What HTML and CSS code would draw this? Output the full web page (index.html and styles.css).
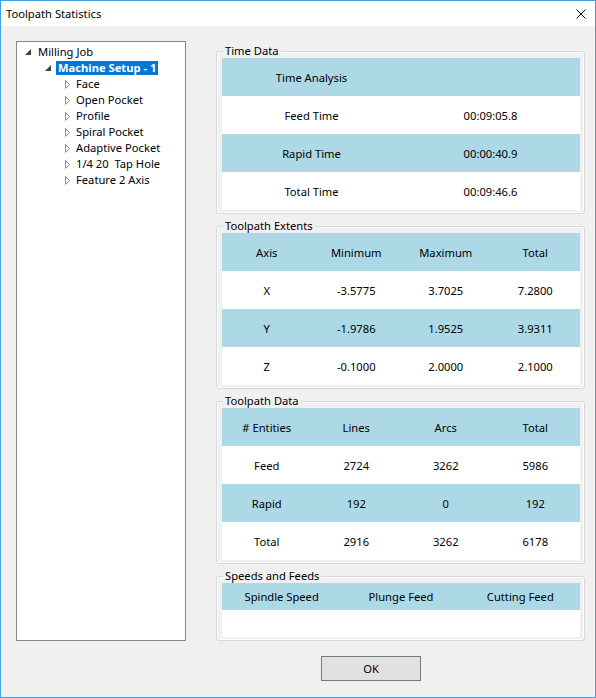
FILE: index.html
```html
<!DOCTYPE html>
<html>
<head>
<meta charset="utf-8">
<title>Toolpath Statistics</title>
<link rel="stylesheet" href="styles.css">
</head>
<body>
<div class="window">
  <div class="titlebar">
    <span class="title">Toolpath Statistics</span>
    <svg class="close" width="10" height="10" viewBox="0 0 10 10"><path d="M0.5 0.5L9.5 9.5M9.5 0.5L0.5 9.5" stroke="#000" stroke-width="1"/></svg>
  </div>
  <div class="client">
    <div class="main">
      <div class="tree">
        <div class="node l0"><svg class="exp" width="6" height="6" viewBox="0 0 6 6"><path d="M6 0V6H0Z" fill="#404040"/></svg><span class="label">Milling Job</span></div>
        <div class="node l1"><svg class="exp" width="6" height="6" viewBox="0 0 6 6"><path d="M6 0V6H0Z" fill="#404040"/></svg><span class="label selected">Machine Setup - 1</span></div>
        <div class="node l2"><svg class="col" width="6" height="9" viewBox="0 0 6 9"><path d="M0.5 0.5L4.5 4.5L0.5 8.5Z" fill="#fff" stroke="#8f8f8f"/></svg><span class="label">Face</span></div>
        <div class="node l2"><svg class="col" width="6" height="9" viewBox="0 0 6 9"><path d="M0.5 0.5L4.5 4.5L0.5 8.5Z" fill="#fff" stroke="#8f8f8f"/></svg><span class="label">Open Pocket</span></div>
        <div class="node l2"><svg class="col" width="6" height="9" viewBox="0 0 6 9"><path d="M0.5 0.5L4.5 4.5L0.5 8.5Z" fill="#fff" stroke="#8f8f8f"/></svg><span class="label">Profile</span></div>
        <div class="node l2"><svg class="col" width="6" height="9" viewBox="0 0 6 9"><path d="M0.5 0.5L4.5 4.5L0.5 8.5Z" fill="#fff" stroke="#8f8f8f"/></svg><span class="label">Spiral Pocket</span></div>
        <div class="node l2"><svg class="col" width="6" height="9" viewBox="0 0 6 9"><path d="M0.5 0.5L4.5 4.5L0.5 8.5Z" fill="#fff" stroke="#8f8f8f"/></svg><span class="label">Adaptive Pocket</span></div>
        <div class="node l2"><svg class="col" width="6" height="9" viewBox="0 0 6 9"><path d="M0.5 0.5L4.5 4.5L0.5 8.5Z" fill="#fff" stroke="#8f8f8f"/></svg><span class="label">1/4 20&nbsp; Tap Hole</span></div>
        <div class="node l2"><svg class="col" width="6" height="9" viewBox="0 0 6 9"><path d="M0.5 0.5L4.5 4.5L0.5 8.5Z" fill="#fff" stroke="#8f8f8f"/></svg><span class="label">Feature 2 Axis</span></div>
      </div>
      <div class="groups">
        <fieldset class="group">
          <legend>Time Data</legend>
          <table class="grid">
            <tr class="hdr"><th>Time Analysis</th><th></th></tr>
            <tr><td>Feed Time</td><td>00:09:05.8</td></tr>
            <tr class="alt"><td>Rapid Time</td><td>00:00:40.9</td></tr>
            <tr><td>Total Time</td><td>00:09:46.6</td></tr>
          </table>
        </fieldset>
        <fieldset class="group">
          <legend>Toolpath Extents</legend>
          <table class="grid">
            <tr class="hdr"><th>Axis</th><th>Minimum</th><th>Maximum</th><th>Total</th></tr>
            <tr><td>X</td><td>-3.5775</td><td>3.7025</td><td>7.2800</td></tr>
            <tr class="alt"><td>Y</td><td>-1.9786</td><td>1.9525</td><td>3.9311</td></tr>
            <tr><td>Z</td><td>-0.1000</td><td>2.0000</td><td>2.1000</td></tr>
          </table>
        </fieldset>
        <fieldset class="group">
          <legend>Toolpath Data</legend>
          <table class="grid">
            <tr class="hdr"><th># Entities</th><th>Lines</th><th>Arcs</th><th>Total</th></tr>
            <tr><td>Feed</td><td>2724</td><td>3262</td><td>5986</td></tr>
            <tr class="alt"><td>Rapid</td><td>192</td><td>0</td><td>192</td></tr>
            <tr><td>Total</td><td>2916</td><td>3262</td><td>6178</td></tr>
          </table>
        </fieldset>
        <fieldset class="group">
          <legend>Speeds and Feeds</legend>
          <table class="grid short">
            <tr class="hdr"><th>Spindle Speed</th><th>Plunge Feed</th><th>Cutting Feed</th></tr>
            <tr><td></td><td></td><td></td></tr>
          </table>
        </fieldset>
      </div>
    </div>
    <div class="footer">
      <button class="ok" type="button">OK</button>
    </div>
  </div>
</div>
</body>
</html>
```
FILE: styles.css
```css
html, body {
  margin: 0;
  padding: 0;
}
body {
  font-family: "Noto Sans", "Open Sans", sans-serif;
  font-size: 11.2px;
  color: #000;
  background: #f0f0f0;
}
.window {
  box-sizing: border-box;
  width: 596px;
  height: 698px;
  border: 1px solid #3c9fe8;
  background: #f0f0f0;
  display: flex;
  flex-direction: column;
}
.titlebar {
  height: 25px;
  flex: none;
  background: #fff;
  display: flex;
  align-items: center;
  justify-content: space-between;
  padding: 0 9px 0 5px;
}
.title {
  line-height: 14px;
}
.close {
  display: block;
}
.client {
  flex: 1;
  padding: 15px 10px 0 15px;
}
.main {
  display: flex;
  align-items: flex-start;
  gap: 30px;
}
.tree {
  box-sizing: border-box;
  width: 170px;
  height: 600px;
  border: 1px solid #828790;
  background: #fff;
  padding-top: 2px;
}
.node {
  display: flex;
  align-items: center;
  height: 16px;
  white-space: nowrap;
}
.l0 { padding-left: 8px; }
.l1 { padding-left: 28px; }
.l2 { padding-left: 48px; }
.exp {
  display: block;
  margin-right: 5px;
}
.col {
  display: block;
  margin-right: 3px;
}
.label {
  padding: 0 2px;
  line-height: 14px;
}
.selected {
  background: #0078d7;
  color: #fff;
  font-weight: bold;
}
.groups {
  width: 369px;
  margin-top: 3px;
  display: flex;
  flex-direction: column;
  gap: 5px;
}
.group {
  margin: 0;
  padding: 0 4px 3px 5px;
  min-width: 0;
  border: 1px solid #d8d8d8;
  border-radius: 3px;
  box-shadow: inset 0 0 0 1px #fff;
}
.group legend {
  padding: 0 2px;
  margin-left: 1px;
  line-height: 14px;
  background: #f0f0f0;
}
.grid {
  width: 100%;
  border-collapse: collapse;
  table-layout: fixed;
  background: #fff;
}
.grid th, .grid td {
  height: 38px;
  padding: 0;
  text-align: center;
  vertical-align: middle;
  font-weight: normal;
  white-space: nowrap;
}
.grid.short th, .grid.short td {
  height: 27px;
}
.hdr, .alt {
  background: #add8e6;
}
.footer {
  padding: 15px 0 0 305px;
}
.ok {
  box-sizing: border-box;
  width: 100px;
  height: 25px;
  padding: 0;
  margin: 0;
  border: 1px solid #7a7a7a;
  background: #e1e1e1;
  font-family: inherit;
  font-size: inherit;
  color: #000;
}
```
